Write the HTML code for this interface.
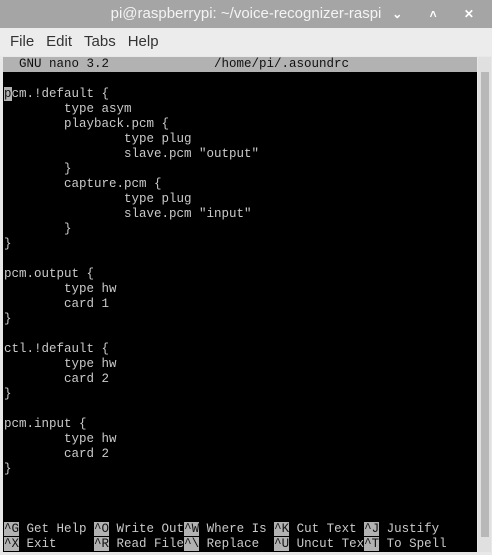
<!DOCTYPE html>
<html><head><meta charset="utf-8"><style>
html,body{margin:0;padding:0;width:492px;height:555px;overflow:hidden;background:#e8e8e8;font-family:"Liberation Sans",sans-serif}
#title{position:absolute;left:0;top:0;width:492px;height:28px;background:#a5a5a5;color:#f4f4f4;font-size:15px;line-height:28px;text-align:center}
#ctl{position:absolute;right:6px;top:0;height:28px;line-height:28px;color:#fff;font-size:12px;font-weight:bold;letter-spacing:12px}
#menu{position:absolute;left:0;top:28px;width:492px;height:28px;background:#ececec;color:#333;font-size:15px;line-height:28px}
#menu span{margin-left:10px;margin-right:2px}
#term{position:absolute;left:3px;top:57px;width:474px;height:495px;background:#000;overflow:hidden}
pre{margin:0;font-family:"Liberation Mono",monospace;font-size:12.5px;line-height:15px;color:#cacaca;position:absolute;left:1px;top:0;white-space:pre}
.hdr{background:#b2b2b2;color:#111;display:block;width:474px;margin-left:-1px;padding-left:1px}
.r{background:#b2b2b2;color:#111}
#sb{position:absolute;left:478px;top:57px;width:13px;height:495px;background:#e0e0e0}
#th{position:absolute;left:481px;top:72px;width:8px;height:465px;background:#b8b8b8}
</style></head><body>
<div id="title">pi@raspberrypi: ~/voice-recognizer-raspi</div>
<div id="ctl">⌄ ˄ ✕</div>
<div id="menu"><span>File</span><span>Edit</span><span>Tabs</span><span>Help</span></div>
<div id="term"><pre><span class="hdr">  GNU nano 3.2              /home/pi/.asoundrc</span>
<span class="r">p</span>cm.!default {
        type asym
        playback.pcm {
                type plug
                slave.pcm "output"
        }
        capture.pcm {
                type plug
                slave.pcm "input"
        }
}

pcm.output {
        type hw
        card 1
}

ctl.!default {
        type hw
        card 2
}

pcm.input {
        type hw
        card 2
}



<span class="r">^G</span> Get Help <span class="r">^O</span> Write Out<span class="r">^W</span> Where Is <span class="r">^K</span> Cut Text <span class="r">^J</span> Justify
<span class="r">^X</span> Exit     <span class="r">^R</span> Read File<span class="r">^\</span> Replace  <span class="r">^U</span> Uncut Tex<span class="r">^T</span> To Spell</pre></div>
<div id="sb"></div><div id="th"></div>
</body></html>
